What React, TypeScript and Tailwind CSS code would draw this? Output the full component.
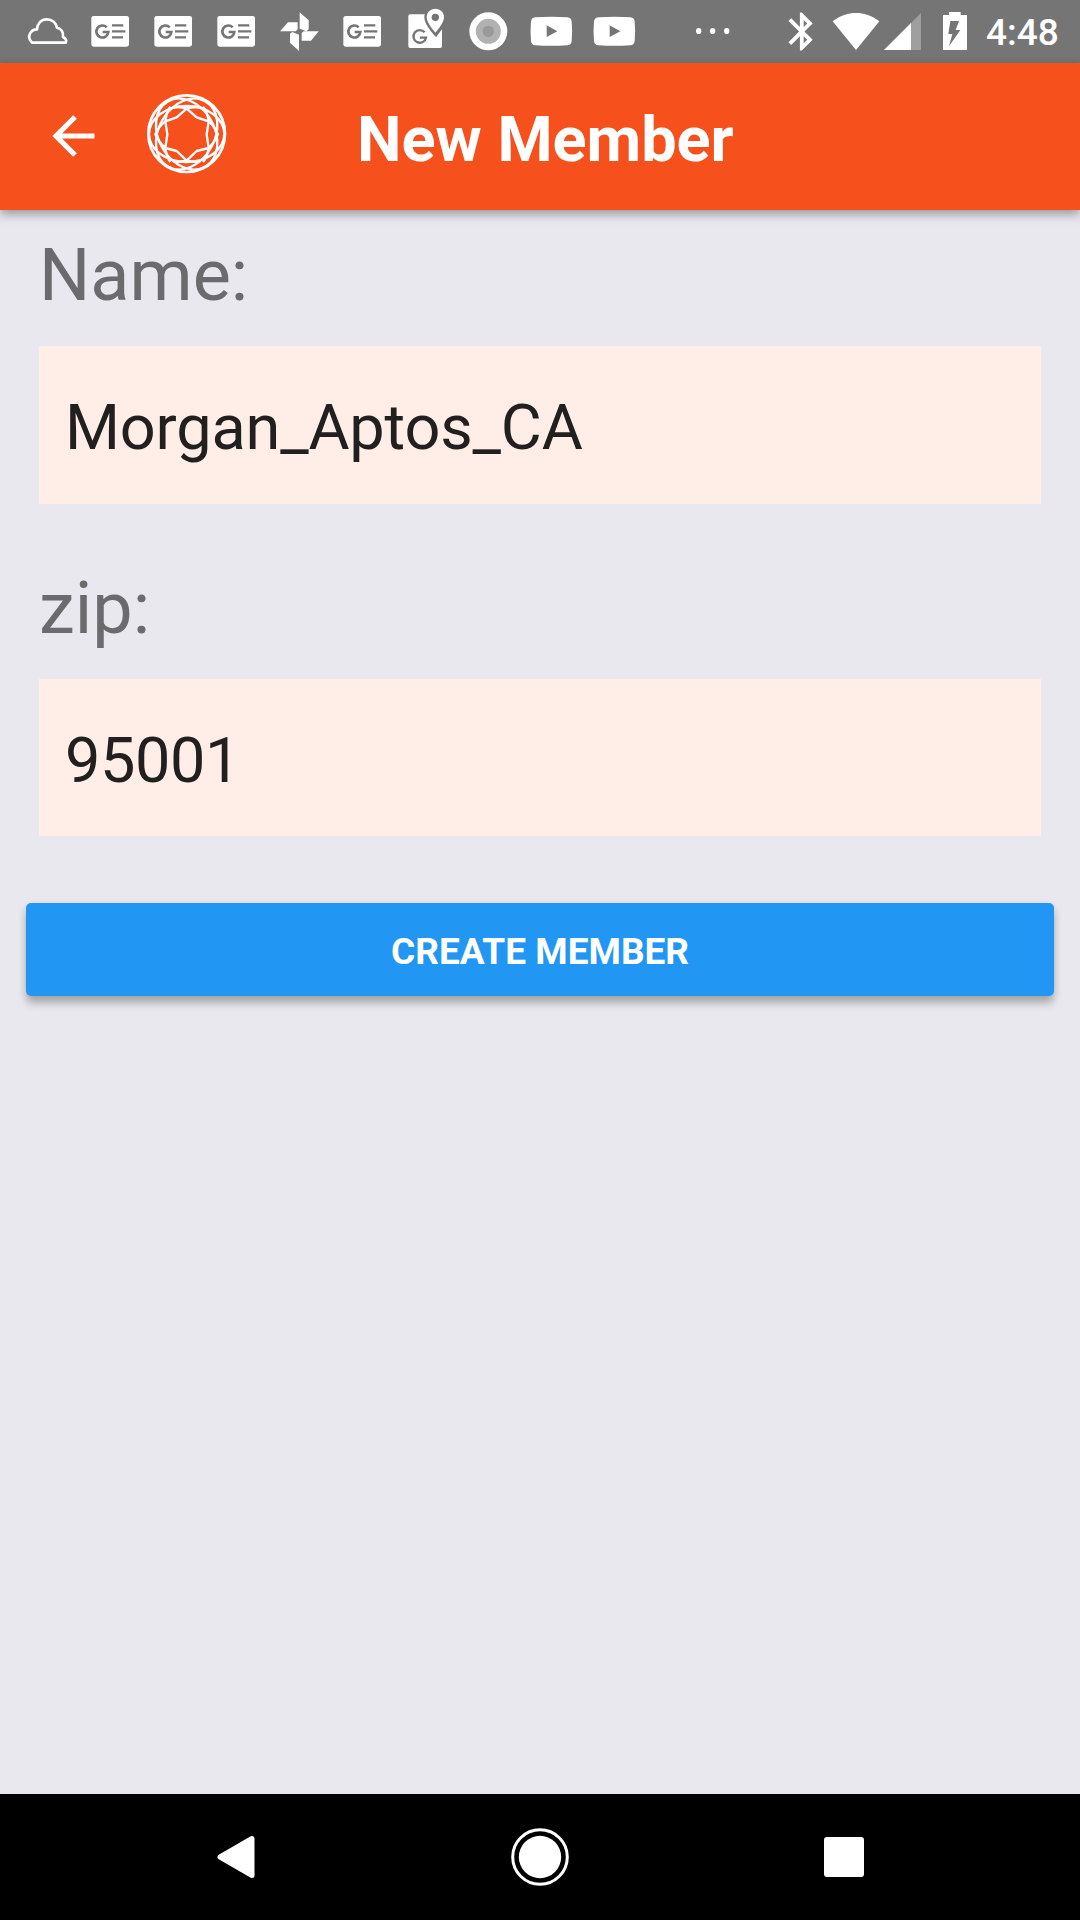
import React from "react";

const cell = "h-[63px] w-[63px] shrink-0";

function CloudIcon() {
  return (
    <svg className={cell} viewBox="0 0 189 189" fill="none" stroke="#fff" strokeWidth="8" strokeLinejoin="round">
      <path d="M48 128C40 120 38 109 42 101C46 92 54 88 63 88C64 70 76 58 92 58C109 58 120 69 123 83C136 86 143 97 141 111C150 115 153 122 149 128Z" />
    </svg>
  );
}

function NewsIcon() {
  return (
    <svg className={cell} viewBox="0 0 189 189">
      <rect x="37" y="48" width="113" height="92" rx="7" fill="#fff" />
      <path d="M83 82A18 18 0 1 0 88 96H71" fill="none" stroke="#757575" strokeWidth="8" />
      <path d="M99 76H133M99 94H139M99 112H132" stroke="#757575" strokeWidth="7" />
    </svg>
  );
}

function PinwheelIcon() {
  return (
    <svg className={cell} viewBox="0 0 189 189" fill="#fff">
      <path d="M95 37L122 61V88L115 94L95 86ZM152 94L129 122H101V99L107 94ZM93 153L66 128V101L73 96L93 104ZM36 94L60 67H89V88L83 94Z" />
    </svg>
  );
}

function MapIcon() {
  return (
    <svg className={cell} viewBox="0 0 189 189">
      <rect x="43" y="43" width="101" height="101" rx="6" fill="#fff" />
      <path d="M124 18C104 18 91 33 91 52C91 76 124 109 124 109L152 76V18Z" fill="#757575" />
      <path d="M124 109L157 66" stroke="#757575" strokeWidth="6" />
      <path d="M124 26C109 26 98 37 98 52C98 70 124 98 124 98S150 70 150 52C150 37 139 26 124 26Z" fill="#fff" />
      <circle cx="124" cy="52" r="11" fill="#757575" />
      <path d="M92 97A19 19 0 1 0 96 113H78" fill="none" stroke="#757575" strokeWidth="7" />
    </svg>
  );
}

function RecordIcon() {
  return (
    <svg className={cell} viewBox="0 0 189 189">
      <circle cx="94" cy="94" r="57" fill="#fff" />
      <circle cx="94" cy="94" r="37.5" fill="#b1b1b1" />
      <circle cx="94" cy="94" r="17" fill="#999" />
    </svg>
  );
}

function VideoIcon() {
  return (
    <svg className={cell} viewBox="0 0 189 189">
      <path d="M46 52Q94 49 142 52Q154 53 155 65Q158 94 155 123Q154 135 142 136Q94 139 46 136Q34 135 33 123Q30 94 33 65Q34 53 46 52Z" fill="#fff" />
      <path d="M80 76L112 94L80 111Z" fill="#757575" />
    </svg>
  );
}

function StatusBar() {
  return (
    <div className="flex h-[63px] w-full shrink-0 items-center bg-[#757575] pl-4">
      <CloudIcon />
      <NewsIcon />
      <NewsIcon />
      <NewsIcon />
      <PinwheelIcon />
      <NewsIcon />
      <MapIcon />
      <RecordIcon />
      <VideoIcon />
      <VideoIcon />
      <svg className="ml-[34px] h-[63px] w-[66px] shrink-0" viewBox="0 0 66 63" fill="#fff">
        <ellipse cx="18.7" cy="31" rx="2.7" ry="3.1" />
        <ellipse cx="32.6" cy="31" rx="2.7" ry="3.1" />
        <ellipse cx="46.7" cy="31" rx="2.7" ry="3.1" />
      </svg>
      <svg className="ml-[31px] h-[63px] w-[50px] shrink-0" viewBox="0 0 50 63" fill="#fff">
        <g transform="translate(2 8.8) scale(1.9)">
          <path d="M17.71 7.71L12 2h-1v7.59L6.41 5 5 6.41 10.59 12 5 17.59 6.41 19 11 14.41V22h1l5.71-5.71-4.3-4.29 4.3-4.29zM13 5.83l1.88 1.88L13 9.59V5.83zm1.88 10.46L13 18.17v-3.76l1.88 1.88z" />
        </g>
      </svg>
      <svg className="ml-[3px] h-[63px] w-[54px] shrink-0" viewBox="0 0 162 189" fill="#fff">
        <path d="M78 150L8 64C32 46 54 39 78 39S124 46 148 64Z" />
      </svg>
      <svg className="h-[63px] w-[48px] shrink-0" viewBox="0 0 144 189">
        <path d="M0 150L111 39V150Z" fill="#9f9f9f" />
        <path d="M0 150L81 69V150Z" fill="#fff" />
      </svg>
      <svg className="ml-[8px] h-[63px] w-[34px] shrink-0" viewBox="0 0 102 189">
        <path d="M9 45H27V36H62V45H81V150H9Z" fill="#fff" />
        <path d="M31 63H57L47 90H61L27 139L37 102H25Z" fill="#757575" />
      </svg>
      <span className="mt-[2px] ml-[12px] text-[37px] leading-none font-medium text-white">4:48</span>
    </div>
  );
}

function GemLogo() {
  return (
    <svg className="ml-[50px] h-[84px] w-[84px] shrink-0" viewBox="0 0 252 252" fill="none" stroke="#fff" strokeWidth="7" strokeLinejoin="round">
      <circle cx="125" cy="125" r="115" strokeWidth="8" />
      <ellipse cx="125" cy="126" rx="113" ry="84" />
      <ellipse cx="125" cy="126" rx="113" ry="84" transform="rotate(60 125 126)" />
      <ellipse cx="125" cy="126" rx="113" ry="84" transform="rotate(-60 125 126)" />
      <path d="M125 50L95 76L61 88L67 127L61 168L95 177L125 206L155 177L191 168L185 127L191 88L155 76Z" />
      <path d="M61 88Q64 62 76 44M191 88Q188 62 174 44M61 168Q64 192 76 210M191 168Q188 192 174 210" />
      <path d="M61 88Q42 102 31 127Q42 152 61 168M191 88Q208 102 219 127Q208 152 191 168" />
      <path d="M125 50Q106 43 84 46M125 50Q144 43 166 46M125 206Q106 211 84 208M125 206Q144 211 166 208" />
    </svg>
  );
}

function AppBar() {
  return (
    <header className="relative z-10 flex h-[147px] w-full shrink-0 bg-[#f6511d] pt-[29px] pl-[45px] shadow-[0_4px_10px_rgba(0,0,0,0.36)]">
      <svg className="mt-[15px] ml-px h-[58px] w-[58px] shrink-0" viewBox="0 0 58 58" fill="none" stroke="#fff" strokeWidth="5.2">
        <path d="M48.500 29H10M29 10L10 29L29 48" />
      </svg>
      <div className="-ml-[9px]">
        <GemLogo />
      </div>
      <h1 className="mt-[11px] ml-[128px] text-[63px] leading-[74px] font-bold text-white">New Member</h1>
    </header>
  );
}

function Field({ label, children }: { label: string; children: React.ReactNode }) {
  return (
    <div className="flex flex-col">
      <label className="h-[84px] text-[72px] leading-[84px] text-[#6b6b6d]">{label}</label>
      <div className="mt-[28px] flex h-[157.5px] items-center bg-[#ffeee8] pl-[26px] text-[63px] leading-[74px] text-[#21201e]">
        {children}
      </div>
    </div>
  );
}

function NavBar() {
  return (
    <nav className="flex h-[126px] w-full shrink-0 items-center justify-between bg-black px-[204px]">
      <svg className="h-[60px] w-[64px]" viewBox="0 0 64 60" fill="#fff" stroke="#fff" strokeWidth="5" strokeLinejoin="round">
        <path d="M16 30L48 11.500V48.500Z" />
      </svg>
      <svg className="h-[60px] w-[60px]" viewBox="0 0 60 60">
        <circle cx="30" cy="30" r="27.300" fill="none" stroke="#fff" strokeWidth="3" />
        <circle cx="30" cy="30" r="21.200" fill="#fff" />
      </svg>
      <svg className="h-[60px] w-[64px]" viewBox="0 0 64 60">
        <rect x="12" y="10" width="40" height="40" rx="3" fill="#fff" />
      </svg>
    </nav>
  );
}

export default function App() {
  return (
    <div className="flex h-[1920px] w-[1080px] flex-col overflow-hidden bg-[#e9e8ee] font-['Roboto',sans-serif]">
      <StatusBar />
      <AppBar />
      <main className="flex grow flex-col">
        <div className="flex flex-col gap-[63px] px-[39px] pt-[24px]">
          <Field label="Name:">
            <span className="mt-[6px] tracking-[-0.16px]">Morgan_Aptos_CA</span>
          </Field>
          <Field label="zip:">
            <span className="mt-[8px] tracking-[-0.4px]">95001</span>
          </Field>
        </div>
        <button className="mx-[26px] mt-[67px] h-[93px] rounded-[5px] bg-[#2196f3] pt-[4px] text-[37px] leading-none font-bold text-white shadow-[0_9px_9px_-1px_rgba(0,0,0,0.2),0_3px_9px_rgba(0,0,0,0.15)]">
          CREATE MEMBER
        </button>
      </main>
      <NavBar />
    </div>
  );
}
